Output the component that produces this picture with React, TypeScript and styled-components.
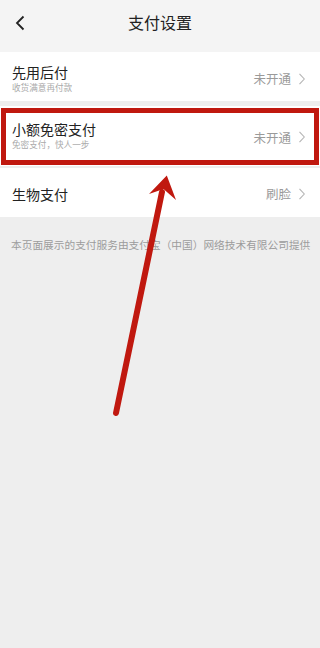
import React from "react";
import styled, { createGlobalStyle } from "styled-components";

const GlobalStyle = createGlobalStyle`
  html, body {
    margin: 0;
    padding: 0;
    background: #eeeeee;
    font-family: "Noto Sans CJK SC", "Noto Sans", sans-serif;
  }
`;

const Page = styled.div`
  position: relative;
  width: 320px;
  min-height: 648px;
  background: #eeeeee;
  overflow: hidden;
`;

const Header = styled.div`
  height: 52px;
  display: flex;
  align-items: center;
  justify-content: center;
  position: relative;
  background: #f4f4f4;
`;

const BackButton = styled.div`
  position: absolute;
  left: 15px;
  top: 15px;
  width: 14px;
  height: 16px;
  display: flex;
  align-items: center;
`;

const Title = styled.h1`
  margin: 0;
  font-size: 16px;
  font-weight: 400;
  color: #222;
  line-height: 1;
  margin-top: -8px;
`;

const List = styled.div`
  display: flex;
  flex-direction: column;
`;

const Row = styled.div<{ $gap?: number; $marked?: boolean }>`
  position: relative;
  display: flex;
  align-items: center;
  justify-content: space-between;
  height: ${(p) => (p.$marked ? 60 : 49)}px;
  margin-top: ${(p) => p.$gap ?? 0}px;
  padding: 0 15px 0 12px;
  background: #fff;

  ${(p) =>
    p.$marked &&
    `
    &::after {
      content: "";
      position: absolute;
      left: 1px;
      right: 1px;
      top: 2px;
      bottom: 1px;
      border: 5px solid #c0180f;
      pointer-events: none;
    }
  `}
`;

const TextBlock = styled.div<{ $shift: number }>`
  display: flex;
  flex-direction: column;
  margin-top: ${(p) => p.$shift}px;
`;

const RowTitle = styled.div`
  font-size: 14px;
  line-height: 18px;
  color: #222;
`;

const RowSub = styled.div`
  font-size: 8.6px;
  line-height: 12px;
  color: #aaa;
  margin-top: 0px;
`;

const Status = styled.div<{ $offset?: number }>`
  display: flex;
  align-items: center;
  gap: 8px;
  font-size: 12.5px;
  color: #9a9a9a;
  margin-top: ${(p) => p.$offset ?? 0}px;
`;

const Footer = styled.p`
  margin: 18px 0 0 11px;
  font-size: 10.7px;
  line-height: 20px;
  color: #9c9c9c;
  white-space: nowrap;
`;

const Annotation = styled.svg`
  position: absolute;
  left: 0;
  top: 0;
  width: 320px;
  height: 648px;
  pointer-events: none;
`;

const Chevron = () => (
  <svg width="6" height="12" viewBox="0 0 6 12">
    <polyline points="0.5,0.8 5.3,6 0.5,11.2" fill="none" stroke="#b4b4b4" strokeWidth="1.1" />
  </svg>
);

type Item = {
  title: string;
  sub?: string;
  status: string;
  gap: number;
  marked?: boolean;
  shift: number;
  offset: number;
};

const items: Item[] = [
  { title: "先用后付", sub: "收货满意再付款", status: "未开通", gap: 0, shift: 2, offset: 4 },
  { title: "小额免密支付", sub: "免密支付，快人一步", status: "未开通", gap: 5, marked: true, shift: -2, offset: 2 },
  { title: "生物支付", status: "刷脸", gap: 2, shift: 2, offset: 2 },
];

export default function App() {
  return (
    <>
      <GlobalStyle />
      <Page>
        <Header>
          <BackButton>
            <svg width="10" height="16" viewBox="0 0 10 16">
              <polyline points="8.5,1.5 2,8 8.5,14.5" fill="none" stroke="#222" strokeWidth="1.8" />
            </svg>
          </BackButton>
          <Title>支付设置</Title>
        </Header>
        <List>
          {items.map((it) => (
            <Row key={it.title} $gap={it.gap} $marked={it.marked}>
              <TextBlock $shift={it.shift}>
                <RowTitle>{it.title}</RowTitle>
                {it.sub && <RowSub>{it.sub}</RowSub>}
              </TextBlock>
              <Status $offset={it.offset}>
                {it.status}
                <Chevron />
              </Status>
            </Row>
          ))}
        </List>
        <Footer>本页面展示的支付服务由支付宝（中国）网络技术有限公司提供</Footer>
        <Annotation viewBox="0 0 320 648">
          <line x1="116" y1="413" x2="162" y2="192" stroke="#c0180f" strokeWidth="6" strokeLinecap="round" />
          <polygon points="166.8,175.5 176,200 163.5,189 149,194" fill="#c0180f" />
        </Annotation>
      </Page>
    </>
  );
}
